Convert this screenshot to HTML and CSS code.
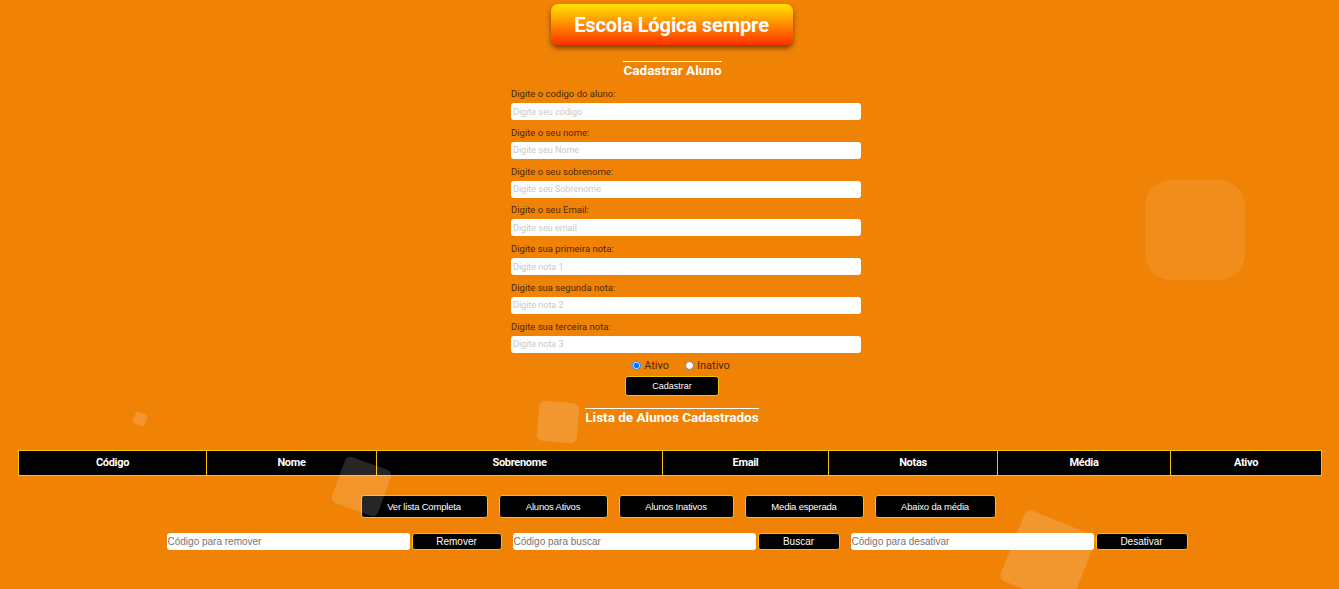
FILE: index.html
```html
<!DOCTYPE html>
<html lang="pt-BR">
<head>
<meta charset="utf-8">
<title>Escola Lógica sempre</title>
<link rel="stylesheet" href="styles.css">
</head>
<body>
<div class="page">
  <header class="top">
    <div class="brand">Escola Lógica sempre</div>
  </header>

  <h2 class="section-title">Cadastrar Aluno</h2>

  <form class="form">
    <label class="lbl">Digite o codigo do aluno:</label>
    <input class="fld" type="text" placeholder="Digite seu código">
    <label class="lbl">Digite o seu nome:</label>
    <input class="fld" type="text" placeholder="Digite seu Nome">
    <label class="lbl">Digite o seu sobrenome:</label>
    <input class="fld" type="text" placeholder="Digite seu Sobrenome">
    <label class="lbl">Digite o seu Email:</label>
    <input class="fld" type="text" placeholder="Digite seu email">
    <label class="lbl">Digite sua primeira nota:</label>
    <input class="fld" type="text" placeholder="Digite nota 1">
    <label class="lbl">Digite sua segunda nota:</label>
    <input class="fld" type="text" placeholder="Digite nota 2">
    <label class="lbl">Digite sua terceira nota:</label>
    <input class="fld" type="text" placeholder="Digite nota 3">
    <div class="radios">
      <label class="opt"><input type="radio" name="st" checked> Ativo</label>
      <label class="opt"><input type="radio" name="st"> Inativo</label>
    </div>
  </form>
  <div class="center-row">
    <button class="btn btn-cad" type="button">Cadastrar</button>
  </div>

  <h2 class="section-title list-title">Lista de Alunos Cadastrados</h2>

  <div class="table-wrap">
    <table class="tbl">
      <thead>
        <tr>
          <th class="c1">Código</th>
          <th class="c2">Nome</th>
          <th class="c3">Sobrenome</th>
          <th class="c4">Email</th>
          <th class="c5">Notas</th>
          <th class="c6">Média</th>
          <th class="c7">Ativo</th>
        </tr>
      </thead>
    </table>
  </div>

  <div class="actions">
    <button class="btn btn-act w1" type="button">Ver lista Completa</button>
    <button class="btn btn-act w2" type="button">Alunos Ativos</button>
    <button class="btn btn-act w3" type="button">Alunos Inativos</button>
    <button class="btn btn-act w4" type="button">Media esperada</button>
    <button class="btn btn-act w5" type="button">Abaixo da média</button>
  </div>

  <div class="tools">
    <div class="tool">
      <input class="tin" type="text" placeholder="Código para remover">
      <button class="btn btn-tool b1" type="button">Remover</button>
    </div>
    <div class="tool">
      <input class="tin" type="text" placeholder="Código para buscar">
      <button class="btn btn-tool b2" type="button">Buscar</button>
    </div>
    <div class="tool">
      <input class="tin" type="text" placeholder="Código para desativar">
      <button class="btn btn-tool b3" type="button">Desativar</button>
    </div>
  </div>
</div>

<div class="squares" aria-hidden="true">
  <span class="sq sq1"></span>
  <span class="sq sq2"></span>
  <span class="sq sq3"></span>
  <span class="sq sq4"></span>
  <span class="sq sq5"></span>
</div>
</body>
</html>
```

FILE: styles.css
```css
* { box-sizing: border-box; }

html, body {
  margin: 0;
  padding: 0;
  height: 100%;
}

body {
  background: #f08305;
  font-family: Roboto, "Liberation Sans", Arial, sans-serif;
  overflow: hidden;
  position: relative;
}

.page {
  display: flex;
  flex-direction: column;
}

.top {
  display: flex;
  justify-content: center;
  padding-top: 4px;
}

.brand {
  width: 242px;
  height: 41px;
  margin-left: 4px;
  border-radius: 7px;
  background: linear-gradient(to bottom, #ffe300 0%, #ff8a00 50%, #ff3200 100%);
  box-shadow: 0 3px 5px rgba(60, 20, 0, 0.65);
  color: #fff;
  font-weight: 700;
  font-size: 20px;
  display: flex;
  align-items: center;
  justify-content: center;
  letter-spacing: -0.1px;
}

.section-title {
  align-self: center;
  margin: 16px 0 0 0;
  padding-top: 0;
  border-top: 1px solid #fff;
  color: #fff;
  font-size: 13.5px;
  line-height: 16px;
  font-weight: 700;
  margin-left: 6px;
}

.form {
  width: 350px;
  margin: 10px 0 0 calc(50% - 158.5px);
  display: flex;
  flex-direction: column;
}

.lbl {
  font-size: 9.5px;
  line-height: 12px;
  color: #4d2800;
  margin-bottom: 3px;
}

.fld {
  height: 17px;
  border: none;
  border-radius: 3px;
  background: #fff;
  padding: 0 2px;
  font-family: Roboto, "Liberation Sans", Arial, sans-serif;
  font-size: 9px;
  margin-bottom: 6.8px;
  outline: none;
}

.fld::placeholder { color: #c8c8c8; }

.radios {
  display: flex;
  justify-content: center;
  gap: 16px;
  margin-top: -1px;
  margin-left: -10px;
  height: 14px;
  align-items: center;
}

.opt {
  display: flex;
  align-items: center;
  gap: 3px;
  font-size: 11px;
  color: #4d2800;
}

.opt input {
  margin: 0;
  width: 9px;
  height: 9px;
}

.center-row {
  display: flex;
  justify-content: center;
  margin-top: 3px;
  padding-left: 5px;
}

.btn {
  background: #000;
  color: #fff;
  border: 1px solid #f7c000;
  border-radius: 3px;
  font-family: "Liberation Sans", Arial, sans-serif;
  padding: 0;
  cursor: pointer;
}

.btn-cad {
  width: 94px;
  height: 20px;
  font-size: 9px;
}

.list-title {
  margin-top: 12px;
  margin-left: 5px;
}

.table-wrap {
  margin: 25px 18px 0 18px;
}

.tbl {
  width: 100%;
  border-collapse: collapse;
  background: #000;
  table-layout: fixed;
}

.tbl th {
  height: 25px;
  border: 1px solid #f7c400;
  color: #fff;
  font-size: 11px;
  font-weight: 700;
  padding: 0;
  letter-spacing: -0.3px;
}

.c1 { width: 188px; }
.c2 { width: 170px; }
.c3 { width: 286px; }
.c4 { width: 166px; }
.c5 { width: 169px; }
.c6 { width: 173px; }
.c7 { width: 151px; }

.actions {
  display: flex;
  justify-content: center;
  gap: 11px;
  margin-top: 19px;
  padding-left: 17px;
}

.btn-act {
  height: 23px;
  font-size: 9.5px;
  letter-spacing: -0.2px;
}

.w1 { width: 127px; }
.w2 { width: 109px; }
.w3 { width: 115px; }
.w4 { width: 119px; }
.w5 { width: 121px; }

.tools {
  display: flex;
  justify-content: center;
  gap: 11px;
  margin-top: 15px;
  padding-left: 15px;
}

.tool {
  display: flex;
  gap: 2px;
}

.tin {
  width: 243px;
  height: 17px;
  border: none;
  border-radius: 3px;
  background: #fff;
  padding: 0 1px;
  font-family: "Liberation Sans", Arial, sans-serif;
  font-size: 10px;
  outline: none;
}

.tin::placeholder { color: #757575; }

.btn-tool {
  height: 17px;
  font-size: 10px;
}

.b1 { width: 90px; }
.b2 { width: 82px; }
.b3 { width: 92px; }

.squares {
  position: absolute;
  inset: 0;
  pointer-events: none;
  overflow: hidden;
}

.sq {
  position: absolute;
  display: block;
  background: rgba(255, 255, 255, 0.17);
}

.sq1 {
  left: 1145px;
  top: 180px;
  width: 100px;
  height: 100px;
  border-radius: 26px;
  background: rgba(255, 255, 255, 0.09);
}

.sq2 {
  left: 133.5px;
  top: 413px;
  width: 12px;
  height: 12px;
  border-radius: 2px;
  transform: rotate(22deg);
}

.sq3 {
  left: 538px;
  top: 402px;
  width: 40px;
  height: 40px;
  border-radius: 6px;
  transform: rotate(5deg);
}

.sq4 {
  left: 337px;
  top: 462px;
  width: 49px;
  height: 49px;
  border-radius: 6px;
  transform: rotate(20deg);
  background: rgba(255, 255, 255, 0.15);
}

.sq5 {
  left: 1010px;
  top: 520px;
  width: 76px;
  height: 76px;
  border-radius: 6px;
  transform: rotate(22deg);
}
```
